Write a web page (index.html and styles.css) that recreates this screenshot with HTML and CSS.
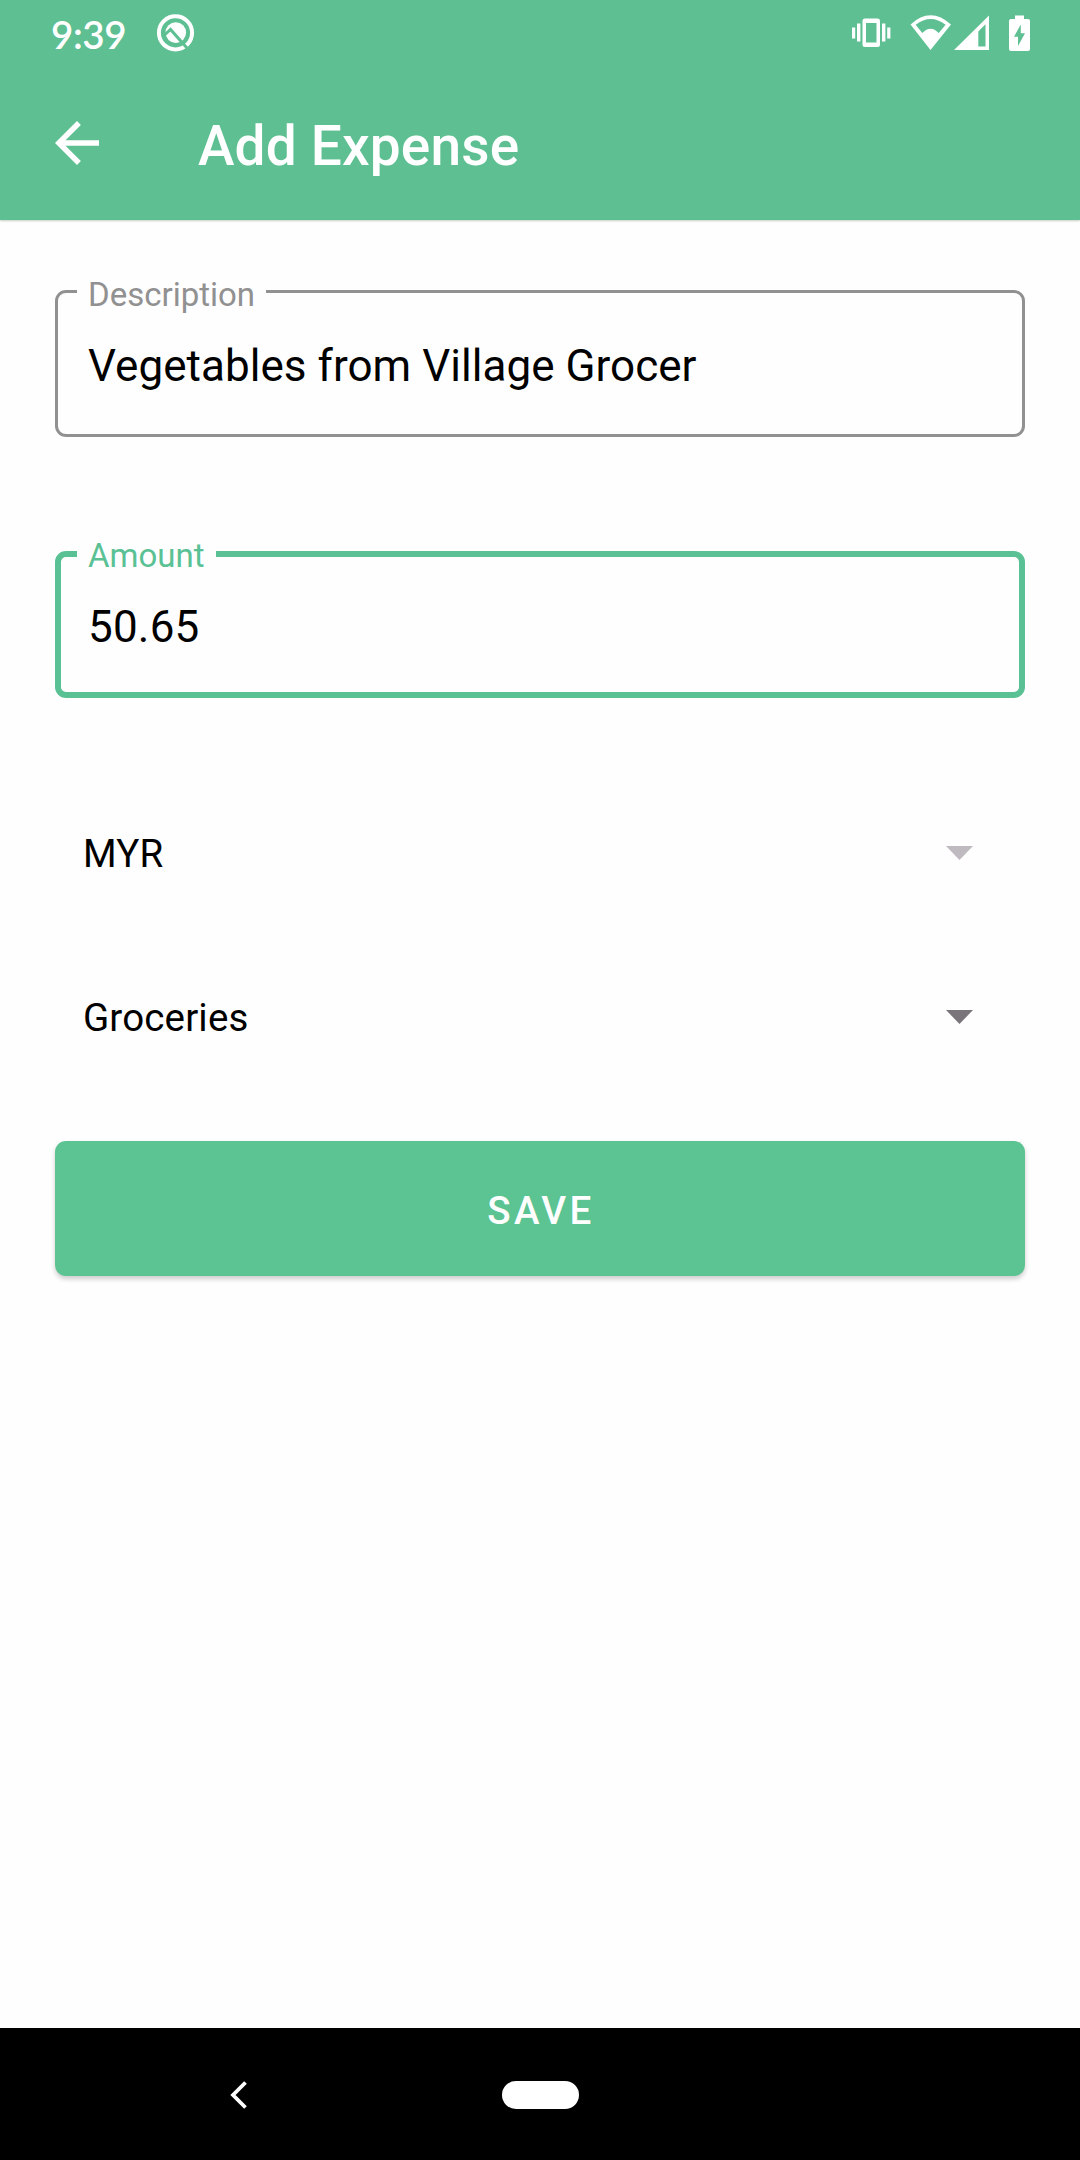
FILE: index.html
```html
<!DOCTYPE html>
<html lang="en">
<head>
<meta charset="utf-8">
<title>Add Expense</title>
<link rel="stylesheet" href="styles.css">
</head>
<body>
<div class="screen">
  <header class="header">
    <div class="status">
      <span class="clock">9:39</span>
      <svg class="q-icon" width="40" height="40" viewBox="0 0 40 40">
        <circle cx="19.500" cy="19.800" r="16.600" fill="none" stroke="#fff" stroke-width="4"/>
        <circle cx="19.800" cy="19.600" r="10.300" fill="#fff"/>
        <path d="M8 22.500L14.500 16.500L31 35" fill="none" stroke="#5ec092" stroke-width="3"/>
      </svg>
      <svg class="status-icons" width="180" height="40" viewBox="850 13 180 40">
        <g fill="#fff">
          <rect x="852" y="27.5" width="3.2" height="11"/>
          <rect x="857" y="23.5" width="3.4" height="18"/>
          <rect x="882" y="23.5" width="3.4" height="18"/>
          <rect x="887.2" y="27.5" width="3.2" height="11"/>
          <path fill-rule="evenodd" d="M865 18.5H877.5Q880 18.5 880 21V44.5Q880 47 877.5 47H865Q862.500 47 862.500 44.500V21Q862.500 18.500 865 18.500ZM866 23V42.500H876.500V23Z"/>
          <path fill-rule="evenodd" d="M930.500 50L910.500 24.500Q930.500 6 951 24.500ZM922.300 33Q930.500 24.500 938.700 33L945.600 24.700Q930.500 13.200 915.700 24.700Z"/>
          <path fill-rule="evenodd" d="M954 50L989 15.500V50ZM978.300 31.500V46.500H985.500V24.200Z"/>
          <path fill-rule="evenodd" d="M1015 15.500H1024V19H1028Q1030 19 1030 21V49Q1030 51 1028 51H1011Q1009 51 1009 49V21Q1009 19 1011 19H1015ZM1020.800 24.500L1014 36.700H1018V46L1025 33.200H1020.800Z"/>
        </g>
      </svg>
    </div>
    <div class="toolbar">
      <svg class="back" width="66" height="66" viewBox="0 0 24 24"><path fill="#fff" d="M20 11H7.83l5.590-5.590L12 4l-8 8 8 8 1.410-1.410L7.830 13H20v-2z"/></svg>
      <h1 class="title">Add Expense</h1>
    </div>
  </header>
  <main class="form">
    <div class="field">
      <span class="field-label">Description</span>
      <span class="field-value">Vegetables from Village Grocer</span>
    </div>
    <div class="field field-active">
      <span class="field-label">Amount</span>
      <span class="field-value">50.65</span>
    </div>
    <div class="spinners">
      <div class="spinner spinner-disabled">
        <span>MYR</span>
        <svg width="27" height="14" viewBox="0 0 27 14"><path fill="currentColor" d="M0 0H27L13.500 14Z"/></svg>
      </div>
      <div class="spinner">
        <span>Groceries</span>
        <svg width="27" height="14" viewBox="0 0 27 14"><path fill="currentColor" d="M0 0H27L13.500 14Z"/></svg>
      </div>
    </div>
    <button class="save">SAVE</button>
  </main>
  <nav class="navbar">
    <svg class="nav-back" width="18" height="28" viewBox="0 0 18 28"><path d="M15.500 1.500L3 14L15.500 26.500" fill="none" stroke="#fff" stroke-width="3.800"/></svg>
    <span class="home"></span>
    <span></span>
  </nav>
</div>
</body>
</html>
```
FILE: styles.css
```css
* { box-sizing: border-box; }

body {
  margin: 0;
  background: #fffeff;
  font-family: Roboto, sans-serif;
  color: #000;
}

.screen {
  display: flex;
  flex-direction: column;
  width: 1080px;
  height: 2160px;
}

.header {
  height: 220px;
  background: #5ec092;
  color: #fff;
  box-shadow: 0 1px 2px rgba(60, 90, 60, 0.3);
}

.status {
  display: flex;
  align-items: center;
  height: 66px;
  padding: 0 50px 0 51px;
}

.clock {
  width: 105px;
  padding-top: 1px;
  font: 600 38.5px/66px Lato, sans-serif;
  letter-spacing: -0.4px;
}

.q-icon { display: block; }

.status-icons {
  display: block;
  margin-left: auto;
}

.toolbar {
  display: flex;
  align-items: center;
  height: 154px;
  padding-left: 44px;
}

.title {
  margin: 6px 0 0 88px;
  font-size: 55px;
  font-weight: 500;
  line-height: 66px;
  letter-spacing: 0.15px;
}

.form {
  flex: 1;
  padding: 70px 55px 0;
}

.field {
  position: relative;
  height: 147px;
  margin-bottom: 114px;
  padding: 47px 30px 0;
  border: 3px solid #919191;
  border-radius: 11px;
}

.field-label {
  position: absolute;
  top: -18px;
  left: 19px;
  padding: 0 11px;
  background: #fffeff;
  color: #919191;
  font-size: 33px;
  line-height: 40px;
}

.field-value {
  display: block;
  font-size: 44px;
  line-height: 52px;
  letter-spacing: 0.04px;
}

.field-active {
  margin-bottom: 73px;
  padding: 44px 27px 0;
  border: 6px solid #5ac194;
}

.field-active .field-label {
  top: -21px;
  left: 16px;
  color: #5ac194;
}

.field-active .field-value { letter-spacing: 0.2px; }

.spinners {
  display: flex;
  flex-direction: column;
}

.spinner {
  display: flex;
  align-items: center;
  justify-content: space-between;
  height: 164px;
  padding: 0 52px 0 28px;
  font-size: 38.5px;
  letter-spacing: 0.15px;
}

.spinner svg {
  margin-top: -1px;
  color: #7a757a;
}

.spinner-disabled svg { color: #bfbabf; }

.save {
  display: block;
  width: 970px;
  height: 135px;
  margin-top: 42px;
  padding: 4px 0 0 2px;
  border: 0;
  border-radius: 11px;
  background: #5cc392;
  box-shadow: 0 3px 5px rgba(0, 0, 0, 0.2);
  color: #fff;
  font: 500 38.5px Roboto, sans-serif;
  letter-spacing: 3.43px;
}

.navbar {
  display: grid;
  grid-template-columns: 478px 124px 478px;
  align-items: center;
  justify-items: center;
  height: 132px;
  padding-top: 1px;
  background: #000;
}

.nav-back { display: block; }

.home {
  width: 77px;
  height: 28px;
  border-radius: 14px;
  background: #fff;
}
```
